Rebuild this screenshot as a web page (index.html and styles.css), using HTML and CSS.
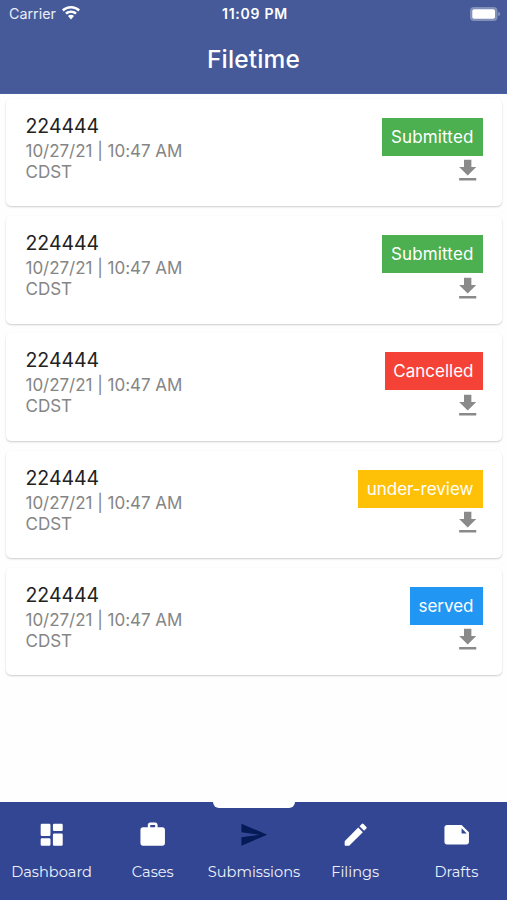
FILE: index.html
```html
<!DOCTYPE html>
<html lang="en">
<head>
<meta charset="utf-8">
<title>Filetime</title>
<link rel="stylesheet" href="styles.css">
</head>
<body>
<svg class="defs" width="0" height="0" aria-hidden="true">
  <symbol id="download" viewBox="0 0 24 24"><path d="M19 9h-4V3H9v6H5l7 7 7-7zM5 18v2h14v-2H5z"/></symbol>
</svg>
<div class="app">
  <header class="header">
    <div class="status">
      <div class="carrier"><span>Carrier</span>
        <svg class="wifi" viewBox="0 0 18 14"><path d="M9 0C5.500 0 2.400 1.400 0 3.600l1.700 1.800C3.600 3.600 6.200 2.500 9 2.500s5.400 1.100 7.300 2.900L18 3.600C15.600 1.400 12.500 0 9 0zm0 4.500c-2.300 0-4.300.9-5.900 2.300l1.700 1.800C6 7.600 7.400 6.900 9 6.900s3 .7 4.200 1.700l1.700-1.800C13.300 5.400 11.300 4.500 9 4.500zm0 4.300c-1.200 0-2.200.4-3 1.100l3 3.500 3-3.500c-.8-.7-1.800-1.100-3-1.100z"/></svg>
      </div>
      <div class="clock">11:09 PM</div>
      <svg class="battery" viewBox="0 0 30 14"><rect width="27.500" height="14" rx="4" opacity=".32"/><rect x="2.300" y="2.300" width="22.700" height="9.400" rx="1.800"/><path d="M28.300 5c1.300.4 1.700 1.200 1.700 2s-.4 1.600-1.700 2z" opacity=".4"/></svg>
    </div>
    <h1 class="title">Filetime</h1>
  </header>
  <main class="list">
    <article class="card"><div><div class="number">224444</div><div class="meta">10/27/21 | 10:47 AM<br>CDST</div></div><div class="side"><span class="badge submitted">Submitted</span><svg class="download"><use href="#download"/></svg></div></article>
    <article class="card"><div><div class="number">224444</div><div class="meta">10/27/21 | 10:47 AM<br>CDST</div></div><div class="side"><span class="badge submitted">Submitted</span><svg class="download"><use href="#download"/></svg></div></article>
    <article class="card"><div><div class="number">224444</div><div class="meta">10/27/21 | 10:47 AM<br>CDST</div></div><div class="side"><span class="badge cancelled">Cancelled</span><svg class="download"><use href="#download"/></svg></div></article>
    <article class="card"><div><div class="number">224444</div><div class="meta">10/27/21 | 10:47 AM<br>CDST</div></div><div class="side"><span class="badge review">under-review</span><svg class="download"><use href="#download"/></svg></div></article>
    <article class="card"><div><div class="number">224444</div><div class="meta">10/27/21 | 10:47 AM<br>CDST</div></div><div class="side"><span class="badge served">served</span><svg class="download"><use href="#download"/></svg></div></article>
  </main>
  <nav class="nav">
    <div class="indicator"></div>
    <a class="tab"><svg viewBox="0 0 24 24"><path d="M4 3h6a1 1 0 0 1 1 1v8a1 1 0 0 1-1 1H4a1 1 0 0 1-1-1V4a1 1 0 0 1 1-1zm0 12h6a1 1 0 0 1 1 1v4a1 1 0 0 1-1 1H4a1 1 0 0 1-1-1v-4a1 1 0 0 1 1-1zm10-4h6a1 1 0 0 1 1 1v8a1 1 0 0 1-1 1h-6a1 1 0 0 1-1-1v-8a1 1 0 0 1 1-1zm0-8h6a1 1 0 0 1 1 1v4a1 1 0 0 1-1 1h-6a1 1 0 0 1-1-1V4a1 1 0 0 1 1-1z"/></svg><span>Dashboard</span></a>
    <a class="tab"><svg viewBox="0 0 24 24"><path d="M20 6h-4V4c0-1.110-.89-2-2-2h-4c-1.110 0-2 .89-2 2v2H4c-1.110 0-1.990.89-1.990 2L2 19c0 1.110.89 2 2 2h16c1.110 0 2-.89 2-2V8c0-1.110-.89-2-2-2zm-6 0h-4V4h4v2z"/></svg><span>Cases</span></a>
    <a class="tab active"><svg viewBox="0 0 24 24"><path d="M2.010 21L23 12 2.010 3 2 10l15 2-15 2z"/></svg><span>Submissions</span></a>
    <a class="tab"><svg viewBox="0 0 24 24"><path d="M3 17.460v3.040c0 .28.22.5.5.5h3.040c.13 0 .26-.05.35-.15L17.810 9.940l-3.750-3.750L3.150 17.100c-.1.1-.15.22-.15.36zM20.710 7.040a.996.996 0 0 0 0-1.410l-2.340-2.340a.996.996 0 0 0-1.410 0l-1.830 1.830 3.750 3.750 1.830-1.830z"/></svg><span>Filings</span></a>
    <a class="tab"><svg viewBox="0 0 24 24"><path fill-rule="evenodd" d="M16 4H4c-1.100 0-2 .9-2 2v12.010c0 1.100.9 1.990 2 1.990h16c1.100 0 2-.9 2-2v-8l-6-6zm0 2.800V11h4.200L16 6.800z"/></svg><span>Drafts</span></a>
  </nav>
</div>
</body>
</html>
```

FILE: styles.css
```css
* { box-sizing: border-box; }
body { margin: 0; background: #fefefe; font-family: Inter, sans-serif; }
.defs { display: block; width: 0; height: 0; }
.app { height: 900px; display: flex; flex-direction: column; overflow: hidden; }
.header { height: 94px; background: #465a99; color: #fff; border-bottom: 1px solid #4a60a4; }
.status { height: 27px; padding: 0 7px 0 9px; display: grid; grid-template-columns: 1fr auto 1fr; align-items: center; }
.carrier { display: flex; align-items: center; gap: 6px; font-size: 14.3px; color: #e9edfa; }
.wifi { width: 18px; height: 14px; fill: #fff; margin-top: -1px; }
.clock { font-size: 14px; font-weight: 600; letter-spacing: .75px; margin-right: -1px; }
.battery { width: 30px; height: 14px; fill: #fff; justify-self: end; }
.title { margin: 0; height: 65px; line-height: 65px; text-align: center; font-size: 24.500px; font-weight: 500; letter-spacing: .15px; }
.list { flex: 1; padding: 4.800px 5px 0 6px; display: flex; flex-direction: column; gap: 9.750px; }
.card { height: 107.500px; flex: none; display: flex; justify-content: space-between; padding: 14px 19.500px 0 19.500px; background: #fff; border-radius: 5px; box-shadow: 0 1px 2px rgba(0,0,0,.2); }
.number { font-size: 19.500px; line-height: 26px; letter-spacing: -.05px; color: #222; }
.meta { font-size: 17px; line-height: 21px; color: #858585; padding-top: 2px; letter-spacing: -.03px; }
.side { display: flex; flex-direction: column; align-items: flex-end; padding-top: 5px; }
.badge { height: 38px; line-height: 38px; padding: 0 9px 0 8.500px; color: #fff; font-size: 17px; }
.submitted { background: #4caf50; letter-spacing: .15px; }
.cancelled { background: #f44336; }
.review { background: #ffc107; }
.served { background: #2196f3; }
.download { width: 29.400px; height: 29.400px; fill: #8a8a8a; margin-top: .5px; }
.nav { height: 98px; padding-left: 1px; background: #334693; position: relative; display: grid; grid-template-columns: repeat(5, minmax(0, 1fr)); }
.indicator { position: absolute; top: 0; left: 213px; width: 82px; height: 6px; background: #fff; border-radius: 0 0 6px 6px; }
.tab { display: flex; flex-direction: column; align-items: center; padding-top: 18px; color: #eef1fc; font-family: Montserrat, Lato, sans-serif; font-size: 14.600px; }
.tab svg { width: 29.400px; height: 29.400px; fill: #fff; }
.tab span { line-height: 20px; margin-top: 13px; white-space: nowrap; }
.tab.active svg { fill: #061a58; }
```
